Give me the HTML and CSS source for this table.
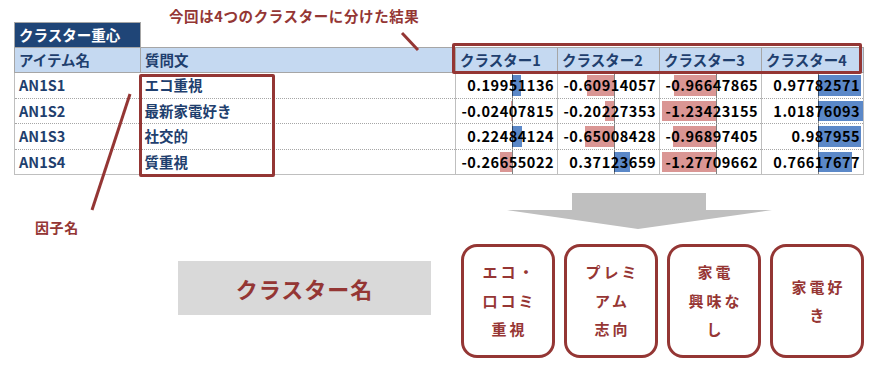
FILE: index.html
```html
<!DOCTYPE html>
<html lang="ja">
<head>
<meta charset="utf-8">
<title>クラスター重心</title>
<link rel="stylesheet" href="styles.css">
</head>
<body>
<div class="page">
  <div class="sheet-wrap">
    <p class="note">今回は4つのクラスターに分けた結果</p>
    <table class="sheet">
      <colgroup>
        <col class="c-item"><col class="c-q"><col class="c-cl"><col class="c-cl"><col class="c-cl"><col class="c-cl">
      </colgroup>
      <tr class="title-row">
        <th class="title">クラスター重心</th>
        <td class="blank" colspan="5"></td>
      </tr>
      <tr class="head-row">
        <th>アイテム名</th><th>質問文</th><th>クラスター1</th><th>クラスター2</th><th>クラスター3</th><th>クラスター4</th>
      </tr>
      <tr>
        <td class="item">AN1S1</td><td class="q">エコ重視</td>
        <td class="num pos" style="--s:56px;--e:64.8px">0.19951136</td>
        <td class="num neg" style="--s:29.2px;--e:56px">-0.60914057</td>
        <td class="num neg" style="--s:13.5px;--e:56px">-0.96647865</td>
        <td class="num pos" style="--s:56px;--e:99px">0.97782571</td>
      </tr>
      <tr>
        <td class="item">AN1S2</td><td class="q">最新家電好き</td>
        <td class="num neg" style="--s:54.9px;--e:56px">-0.02407815</td>
        <td class="num neg" style="--s:47.1px;--e:56px">-0.20227353</td>
        <td class="num neg" style="--s:2px;--e:56px">-1.23423155</td>
        <td class="num pos" style="--s:56px;--e:100.8px">1.01876093</td>
      </tr>
      <tr>
        <td class="item">AN1S3</td><td class="q">社交的</td>
        <td class="num pos" style="--s:56px;--e:65.9px">0.22484124</td>
        <td class="num neg" style="--s:27.4px;--e:56px">-0.65008428</td>
        <td class="num neg" style="--s:13.4px;--e:56px">-0.96897405</td>
        <td class="num pos" style="--s:56px;--e:99.5px">0.987955</td>
      </tr>
      <tr class="last">
        <td class="item">AN1S4</td><td class="q">質重視</td>
        <td class="num neg" style="--s:44.3px;--e:56px">-0.26655022</td>
        <td class="num pos" style="--s:56px;--e:72.3px">0.37123659</td>
        <td class="num neg" style="--s:2px;--e:56px">-1.27709662</td>
        <td class="num pos" style="--s:56px;--e:89.7px">0.76617677</td>
      </tr>
    </table>
    <div class="hl hl-items"></div>
    <div class="hl hl-clusters"></div>
  </div>

  <div class="bottom">
    <div class="left">
      <p class="factor">因子名</p>
      <div class="cname">クラスター名</div>
    </div>
    <div class="right">
      <svg class="arrow" width="265" height="36" viewBox="0 0 265 36">
        <polygon points="65,0 199,0 199,17 265,17 131,36 0,17 65,17" fill="#bfbfbf"/>
      </svg>
      <div class="boxes">
        <div class="box"><span>エコ・</span><span>口コミ</span><span>重視</span></div>
        <div class="box"><span>プレミ</span><span>アム</span><span>志向</span></div>
        <div class="box"><span>家電</span><span>興味な</span><span>し</span></div>
        <div class="box"><span>家電好</span><span>き</span></div>
      </div>
    </div>
  </div>

  <svg class="callouts" width="894" height="371" viewBox="0 0 894 371">
    <line x1="402" y1="33" x2="418" y2="50" stroke="#943634" stroke-width="3"/>
    <line x1="130" y1="94" x2="92" y2="210" stroke="#943634" stroke-width="3"/>
  </svg>
</div>
</body>
</html>
```
FILE: styles.css
```css
* { box-sizing: border-box; }
html, body { margin: 0; padding: 0; background: #fff; }
body {
  font-family: "Noto Sans CJK JP", "Noto Sans", sans-serif;
  font-weight: 700;
  width: 894px;
  height: 371px;
  overflow: hidden;
}
.page { position: relative; width: 894px; height: 371px; }

.sheet-wrap { position: relative; padding: 22px 0 0 14px; }

.note {
  position: absolute;
  left: 169px;
  top: 6px;
  margin: 0;
  font-size: 14.5px;
  line-height: 20px;
  letter-spacing: 0.6px;
  color: #943634;
  white-space: nowrap;
}

.sheet {
  border-collapse: collapse;
  table-layout: fixed;
  width: 849px;
  font-size: 14.5px;
}
.c-item { width: 126px; }
.c-q { width: 315px; }
.c-cl { width: 102px; }

.sheet th, .sheet td {
  padding: 0 4px;
  line-height: 18px;
  white-space: nowrap;
  overflow: hidden;
}
.title-row { height: 25px; }
.title {
  background: #1f4577;
  color: #fff;
  text-align: left;
  border: 1px solid #a6a6a6;
}
.blank { border: none; border-bottom: 1px solid #a6a6a6; }

.head-row { height: 25px; }
.head-row th {
  background: #c5d9f1;
  color: #1f3f6e;
  text-align: left;
  border: 1px solid #a6a6a6;
}

.sheet tr:not(.title-row):not(.head-row) { height: 25.5px; }
.sheet td {
  border-bottom: 1px dotted #a6a6a6;
}
.sheet tr.last td { border-bottom: 1px solid #bfbfbf; }
.item { color: #1f3f6e; border-left: 1px solid #bfbfbf; }
.q { color: #1f3f6e; }

.num {
  text-align: right;
  color: #000;
  padding-right: 3px !important;
  letter-spacing: 0.5px;
  border-left: 1px solid #bfbfbf;
  border-right: 1px solid #bfbfbf;
  background-image:
    linear-gradient(to bottom, #000 50%, transparent 50%),
    linear-gradient(to right, transparent var(--s), var(--bar) var(--s), var(--bar) var(--e), transparent var(--e));
  background-size: 1px 2px, 100% calc(100% - 4px);
  background-position: 56px 0, 0 2px;
  background-repeat: repeat-y, no-repeat;
}
.pos { --bar: #5b88c8; }
.neg { --bar: #da9694; }

.hl {
  position: absolute;
  border: 3px solid #943634;
  pointer-events: none;
}
.hl-items { left: 139px; top: 74px; width: 136px; height: 103px; border-radius: 2px; }
.hl-clusters { left: 452px; top: 43px; width: 410px; height: 31px; border-radius: 2px; }

.bottom {
  display: flex;
  margin-top: 18px;
}
.left { width: 461px; flex: none; }
.factor {
  margin: 24px 0 0 35px;
  font-size: 14px;
  line-height: 20px;
  letter-spacing: 0.6px;
  color: #943634;
}
.cname {
  margin: 24px 0 0 178px;
  width: 253px;
  height: 54px;
  background: #d9d9d9;
  color: #943634;
  font-size: 22px;
  letter-spacing: 1px;
  display: flex;
  align-items: center;
  justify-content: center;
}

.right { flex: none; }
.arrow { display: block; margin-left: 46px; }
.boxes {
  display: flex;
  gap: 9px;
  margin-top: 15px;
}
.box {
  width: 94px;
  height: 114px;
  border: 3px solid #943634;
  border-radius: 16px;
  background: #fff;
  color: #963634;
  font-size: 15px;
  line-height: 28.5px;
  letter-spacing: 3px;
  display: flex;
  flex-direction: column;
  align-items: center;
  justify-content: center;
  padding-left: 3px;
}

.callouts {
  position: absolute;
  left: 0;
  top: 0;
  pointer-events: none;
}
```
